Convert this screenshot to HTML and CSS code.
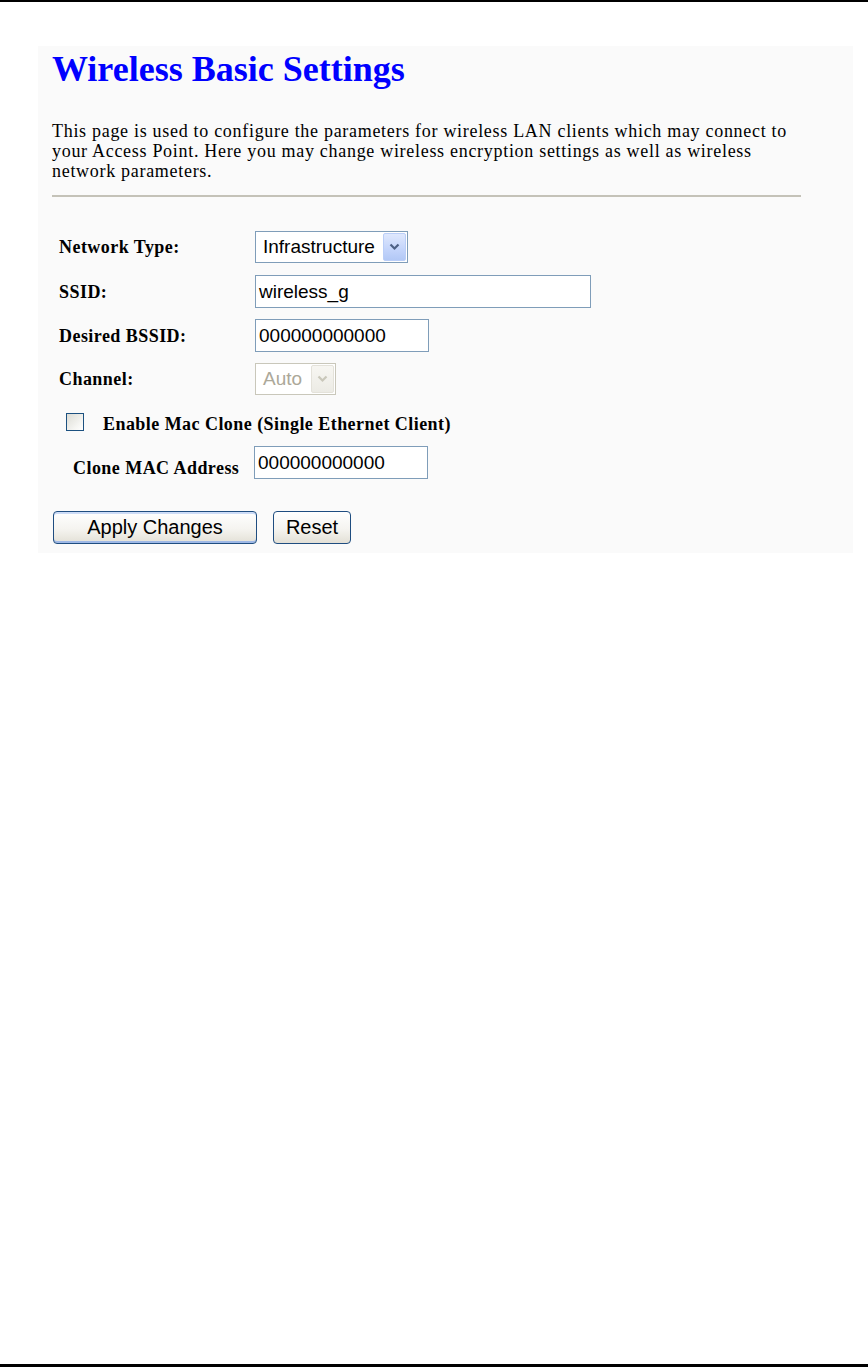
FILE: index.html
```html
<!DOCTYPE html>
<html lang="en">
<head>
<meta charset="utf-8">
<title>Wireless Basic Settings</title>
<link rel="stylesheet" href="styles.css">
</head>
<body>
<div class="page">
  <div class="rule-top"></div>
  <main class="panel">
    <h1 class="title">Wireless Basic Settings</h1>
    <p class="intro">This page is used to configure the parameters for wireless LAN clients which may connect to your Access Point. Here you may change wireless encryption settings as well as wireless network parameters.</p>
    <hr class="divider">
    <form class="settings">
      <div class="row">
        <span class="label">Network Type:</span>
        <div class="select select-type">
          <span class="select-text">Infrastructure</span>
          <span class="select-btn"><svg width="11" height="8" viewBox="0 0 11 8"><path d="M1.5 1.5 L5.5 5.5 L9.5 1.5" fill="none" stroke="#4d6185" stroke-width="2.2"/></svg></span>
        </div>
      </div>
      <div class="row">
        <span class="label">SSID:</span>
        <div class="input input-ssid">wireless_g</div>
      </div>
      <div class="row">
        <span class="label">Desired BSSID:</span>
        <div class="input input-short">000000000000</div>
      </div>
      <div class="row">
        <span class="label">Channel:</span>
        <div class="select select-channel disabled">
          <span class="select-text">Auto</span>
          <span class="select-btn"><svg width="11" height="8" viewBox="0 0 11 8"><path d="M1.5 1.5 L5.5 5.5 L9.5 1.5" fill="none" stroke="#c9c7ba" stroke-width="2.2"/></svg></span>
        </div>
      </div>
      <div class="check-row">
        <span class="checkbox"></span>
        <span class="label">Enable Mac Clone (Single Ethernet Client)</span>
      </div>
      <div class="row clone-row">
        <span class="label clone-label">Clone MAC Address</span>
        <div class="input input-short">000000000000</div>
      </div>
      <div class="buttons">
        <span class="btn btn-apply">Apply Changes</span>
        <span class="btn btn-reset">Reset</span>
      </div>
    </form>
  </main>
  <div class="rule-bottom"></div>
</div>
</body>
</html>
```
FILE: styles.css
```css
html, body {
  margin: 0;
  padding: 0;
  background: #ffffff;
}

.page {
  height: 1367px;
  display: flex;
  flex-direction: column;
  font-family: "Liberation Serif", "Times New Roman", serif;
  color: #000;
}

.rule-top {
  height: 2px;
  background: #000;
}

.rule-bottom {
  margin-top: auto;
  height: 3px;
  background: #000;
}

.panel {
  margin: 44px 0 0 38px;
  width: 815px;
  height: 507px;
  box-sizing: border-box;
  padding: 3px 0 0 14px;
  background: #fafafa;
}

.title {
  margin: 0;
  font-size: 36px;
  line-height: 41px;
  font-weight: 700;
  color: #0000ff;
}

.intro {
  margin: 31px 0 0 0;
  width: 750px;
  font-size: 18px;
  line-height: 20px;
  letter-spacing: 0.7px;
}

.divider {
  margin: 14px 0 0 0;
  width: 749px;
  height: 2px;
  border: 0;
  background: #c4c2b8;
}

.settings {
  margin-top: 34px;
  padding-left: 7px;
  display: flex;
  flex-direction: column;
  gap: 12px;
}

.row {
  display: grid;
  grid-template-columns: 196px auto;
  align-items: center;
  height: 32px;
}

.label {
  font-size: 18px;
  line-height: 20px;
  font-weight: 700;
  letter-spacing: 0.45px;
}

.select {
  display: flex;
  align-items: stretch;
  height: 32px;
  box-sizing: border-box;
  border: 1px solid #7f9db9;
  background: #fff;
  font-family: "Liberation Sans", Arial, sans-serif;
  font-size: 19px;
}

.select-type { width: 153px; }
.select-channel { width: 81px; }

.select-text {
  flex: 1;
  display: flex;
  align-items: center;
  padding-left: 7px;
}

.select-btn {
  width: 23px;
  margin: 1px;
  display: flex;
  align-items: center;
  justify-content: center;
  box-sizing: border-box;
  border: 1px solid #bacef8;
  border-radius: 2px;
  background: linear-gradient(#dfe8fd, #c3d4fb 60%, #b2c8f6);
}

.select.disabled {
  border-color: #c9c7ba;
  color: #aca899;
}

.select.disabled .select-btn {
  border-color: #e4e2da;
  background: linear-gradient(#f7f6f2, #ecebe5);
}

.input {
  height: 33px;
  box-sizing: border-box;
  border: 1px solid #7f9db9;
  background: #fff;
  font-family: "Liberation Sans", Arial, sans-serif;
  font-size: 19px;
  display: flex;
  align-items: center;
  padding-left: 3px;
}

.input-ssid { width: 336px; }
.input-short { width: 174px; }

.check-row {
  display: flex;
  align-items: center;
  height: 24px;
  margin-top: 3px;
  padding-left: 7px;
}

.check-row .label {
  padding-top: 4px;
}

.checkbox {
  width: 18px;
  height: 18px;
  box-sizing: border-box;
  border: 1px solid #1c5180;
  background: linear-gradient(135deg, #dcdcd5, #f6f6f3 70%, #fff);
  margin-right: 19px;
}

.clone-row {
  grid-template-columns: 181px auto;
  padding-left: 14px;
}

.clone-label {
  padding-top: 10px;
}

.buttons {
  display: flex;
  gap: 16px;
  margin: 21px 0 0 -6px;
}

.btn {
  height: 33px;
  box-sizing: border-box;
  display: flex;
  align-items: center;
  justify-content: center;
  border: 1px solid #1f4d80;
  border-radius: 4px;
  background: linear-gradient(#ffffff, #f5f4f0 55%, #e3e0d6);
  font-family: "Liberation Sans", Arial, sans-serif;
  font-size: 20px;
  color: #000;
}

.btn-apply {
  width: 204px;
  box-shadow: inset 0 -2px 0 #9eb8e6, inset 0 2px 0 #cddcf7;
}

.btn-reset {
  width: 78px;
}
```
